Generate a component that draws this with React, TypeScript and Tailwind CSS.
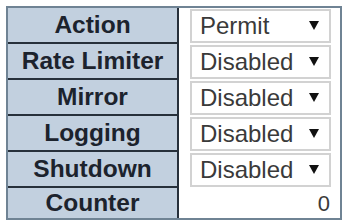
const rows = [
  { label: 'Action', value: 'Permit' },
  { label: 'Rate Limiter', value: 'Disabled' },
  { label: 'Mirror', value: 'Disabled' },
  { label: 'Logging', value: 'Disabled' },
  { label: 'Shutdown', value: 'Disabled' },
];

function FakeSelect({ value }: { value: string }) {
  return (
    <div className="flex h-[34px] w-[141px] items-center justify-between border-2 border-[#d2d2d2] bg-white pl-[8px] pr-[10px]">
      <span className="text-[24px] leading-none text-[#3a3a3a]">{value}</span>
      <svg width="10" height="9" viewBox="0 0 10 9" className="mt-[-2px]">
        <path d="M0 0 H10 L5 9 Z" fill="#111" />
      </svg>
    </div>
  );
}

export default function App() {
  return (
    <div className="h-[224px] w-[348px] bg-white pl-[6px] pt-[6px]" style={{ fontFamily: '"Liberation Sans", Arial, sans-serif' }}>
      <div className="flex w-[336px] border-2 border-[#6f8394]">
        {/* label column */}
        <div className="flex w-[173px] flex-col border-r-2 border-[#27303b] bg-[#c2d0df]">
          {rows.map((r) => (
            <div
              key={r.label}
              className="flex h-[36px] items-center justify-center border-b-2 border-[#27303b] text-[24.5px] font-bold text-[#1c232d]"
            >
              {r.label}
            </div>
          ))}
          <div className="flex h-[30px] items-center justify-center text-[24.5px] font-bold text-[#1c232d]">
            Counter
          </div>
        </div>

        {/* value column */}
        <div className="flex flex-1 flex-col bg-white pl-[11px] pr-[9px]">
          {rows.map((r) => (
            <div key={r.label} className="flex h-[36px] items-center">
              <FakeSelect value={r.value} />
            </div>
          ))}
          <div className="flex h-[30px] items-center justify-end pr-[1px] text-[22px] text-[#3a3a3a]">0</div>
        </div>
      </div>
    </div>
  );
}
